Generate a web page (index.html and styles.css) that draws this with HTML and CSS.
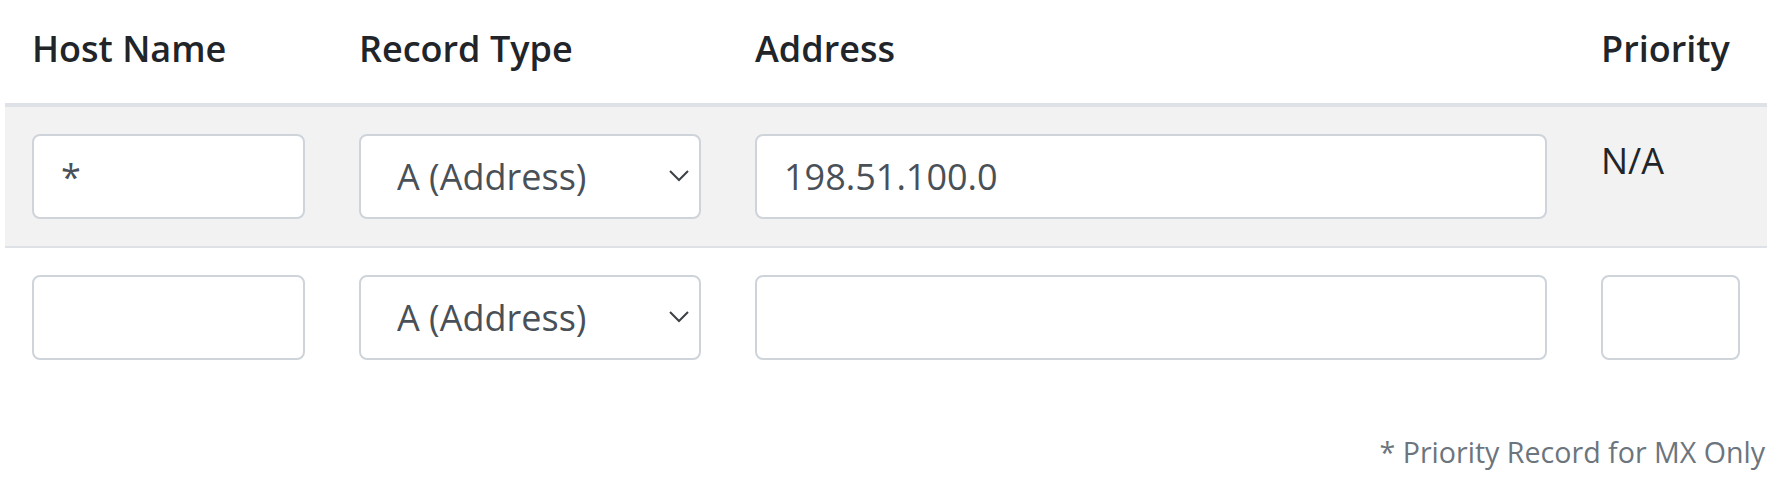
FILE: index.html
```html
<!DOCTYPE html>
<html lang="en">
<head>
<meta charset="utf-8">
<title>DNS Records</title>
<link rel="stylesheet" href="styles.css">
</head>
<body>
<div class="wrap">
  <table class="records">
    <colgroup>
      <col class="c-host">
      <col class="c-type">
      <col class="c-addr">
      <col class="c-prio">
    </colgroup>
    <thead>
      <tr>
        <th>Host Name</th>
        <th>Record Type</th>
        <th>Address</th>
        <th>Priority</th>
      </tr>
    </thead>
    <tbody>
      <tr class="row-active">
        <td><input class="field" type="text" value="*"></td>
        <td>
          <div class="select-wrap">
            <select class="field select"><option>A (Address)</option></select>
            <svg class="chev" width="20" height="12" viewBox="0 0 20 12"><path d="M1 1 L10 10 L19 1" fill="none" stroke="#3d4146" stroke-width="2"/></svg>
          </div>
        </td>
        <td><input class="field" type="text" value="198.51.100.0"></td>
        <td class="na">N/A</td>
      </tr>
      <tr>
        <td><input class="field" type="text" value=""></td>
        <td>
          <div class="select-wrap">
            <select class="field select"><option>A (Address)</option></select>
            <svg class="chev" width="20" height="12" viewBox="0 0 20 12"><path d="M1 1 L10 10 L19 1" fill="none" stroke="#3d4146" stroke-width="2"/></svg>
          </div>
        </td>
        <td><input class="field" type="text" value=""></td>
        <td><input class="field prio" type="text" value=""></td>
      </tr>
    </tbody>
  </table>
  <div class="note">* Priority Record for MX Only</div>
</div>
</body>
</html>
```
FILE: styles.css
```css
html, body {
  margin: 0;
  padding: 0;
  background: #ffffff;
}
body {
  font-family: "Open Sans", "Liberation Sans", sans-serif;
  font-size: 36px;
  line-height: 1.5;
  color: #212529;
}
.wrap {
  width: 1762px;
  margin-left: 5px;
}
.records {
  width: 1762px;
  table-layout: fixed;
  border-collapse: collapse;
}
.c-host { width: 327px; }
.c-type { width: 396px; }
.c-addr { width: 846px; }
.c-prio { width: 193px; }
.records th {
  text-align: left;
  font-weight: 600;
  padding: 22px 27px 27px 27px;
  border-bottom: 4px solid #dee2e6;
  vertical-align: bottom;
  white-space: nowrap;
}
.records td {
  padding: 27px;
  vertical-align: top;
  border-top: 2px solid #dee2e6;
}
.row-active td {
  background: #f2f2f2;
  border-top: none;
}
.field {
  display: block;
  box-sizing: border-box;
  width: 100%;
  height: 85px;
  margin: 0;
  padding: 13.5px 27px;
  font-family: "Open Sans", "Liberation Sans", sans-serif;
  font-size: 36px;
  line-height: 1.5;
  color: #495057;
  background: #ffffff;
  border: 2px solid #ced4da;
  border-radius: 8px;
  outline: none;
}
.select-wrap {
  position: relative;
}
.select {
  appearance: none;
  -webkit-appearance: none;
  padding-left: 36px;
  padding-right: 50px;
}
.chev {
  position: absolute;
  right: 12px;
  top: 36px;
  pointer-events: none;
}
.na {
  color: #212529;
}
.prio {
  width: 139px;
}
.note {
  margin-top: 44px;
  text-align: right;
  padding-right: 2px;
  font-size: 28.6px;
  line-height: 1.5;
  color: #6c757d;
}
```
